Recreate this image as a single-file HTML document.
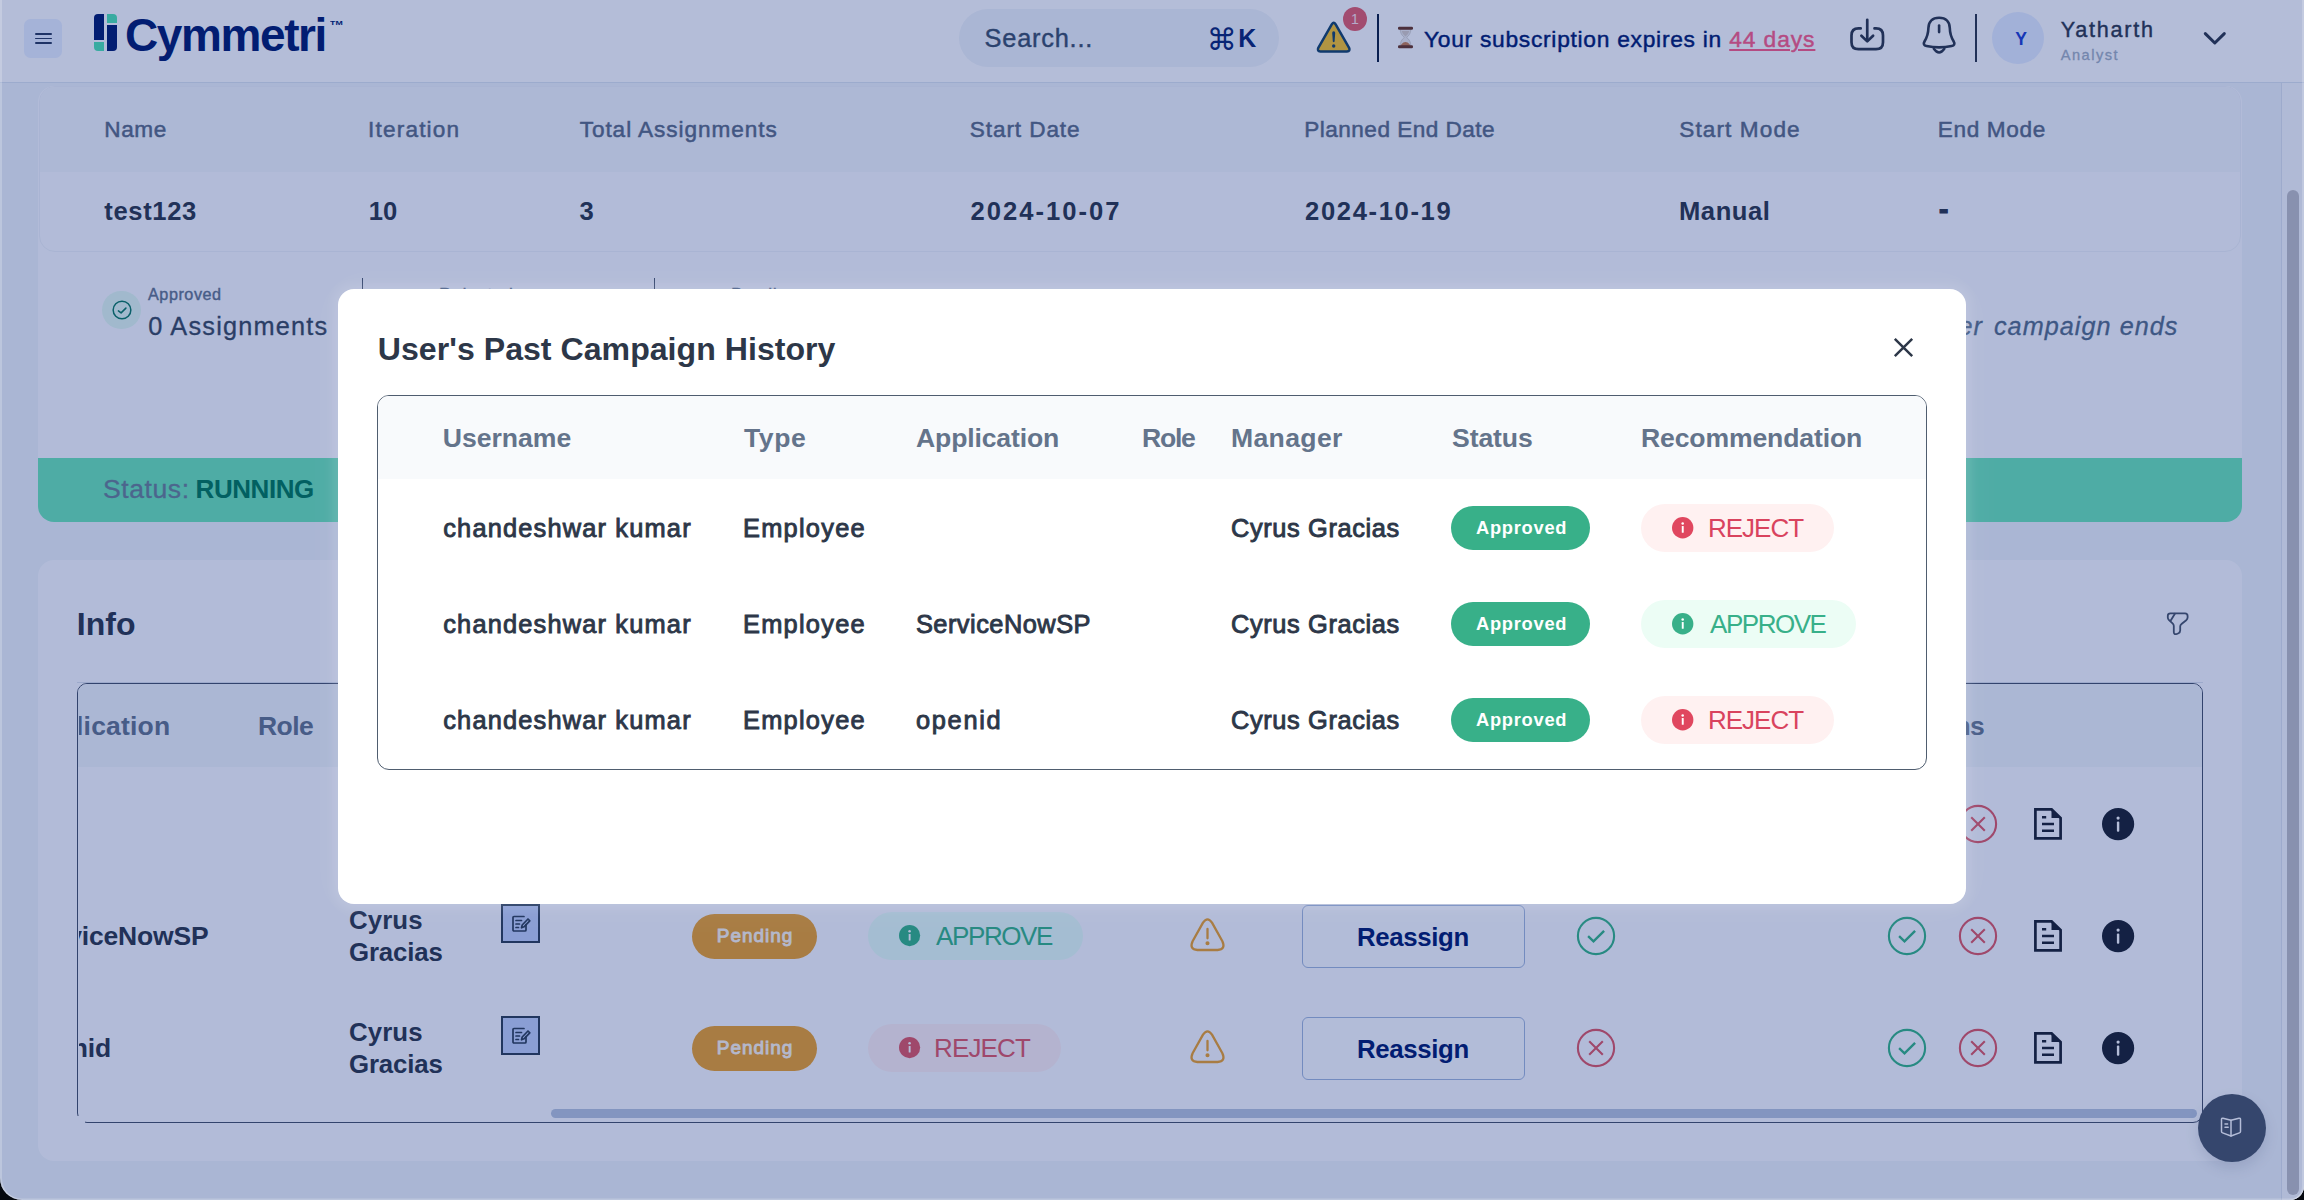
<!DOCTYPE html>
<html lang="en"><head><meta charset="utf-8"><title>Cymmetri - Campaign</title>
<style>
*{box-sizing:border-box;margin:0;padding:0}
html,body{width:2304px;height:1200px;overflow:hidden;background:#05080f;font-family:"Liberation Sans",sans-serif}
#page{position:absolute;left:0;top:0;width:2304px;height:1200px;background:#F1F5F9;overflow:hidden;border-radius:0 0 14px 22px}
.a{position:absolute}
.t{position:absolute;white-space:nowrap;line-height:1;display:block}
#overlay{position:absolute;left:0;top:0;width:2304px;height:1200px;background:rgba(8,35,125,0.30);border-radius:0 0 14px 22px;box-shadow:inset 2px 0 0 rgba(255,255,255,0.22),inset -2px 0 0 rgba(255,255,255,0.22),inset 0 -1.5px 0 rgba(255,255,255,0.22)}
#modal{position:absolute;left:337.9px;top:289.2px;width:1628.3px;height:615px;background:#fff;border-radius:16px;box-shadow:0 0 10px 6px rgba(255,255,255,0.10),0 0 40px 8px rgba(255,255,255,0.05)}
svg{position:absolute;overflow:visible}
</style></head><body>
<div id="page">
  <!-- header -->
  <div class="a" style="left:0;top:0;width:2304px;height:82.6px;background:#fff;border-bottom:1.6px solid #DDE5F0"></div>
  <div class="a" style="left:24px;top:19.2px;width:38.3px;height:38.5px;border-radius:6.5px;background:#EAF1FF"></div>
  <div class="a" style="left:34.6px;top:33.2px;width:17.2px;height:1.8px;border-radius:1px;background:#2A3A5C"></div>
  <div class="a" style="left:34.6px;top:37.6px;width:17.2px;height:1.8px;border-radius:1px;background:#2A3A5C"></div>
  <div class="a" style="left:34.6px;top:41.9px;width:17.2px;height:1.8px;border-radius:1px;background:#2A3A5C"></div>
  <!-- logo mark -->
  <div class="a" style="left:94.3px;top:14.3px;width:9.6px;height:25.5px;border-radius:4px 0 0 0;background:#001A6E"></div>
  <div class="a" style="left:94.3px;top:41.8px;width:9.6px;height:9.3px;border-radius:0 0 0 4px;background:#50E6B0"></div>
  <div class="a" style="left:107.2px;top:14.3px;width:9.7px;height:8.8px;border-radius:0 4px 0 0;background:#50E6B0"></div>
  <div class="a" style="left:107.2px;top:25px;width:9.7px;height:26.1px;border-radius:0 0 4px 0;background:#001A6E"></div>
  <!-- search -->
  <div class="a" style="left:959px;top:9px;width:320px;height:58px;border-radius:29px;background:#F1F5F9"></div>
  <span class="t" style="left:1206.8px;top:24.6px;font-family:'DejaVu Sans',sans-serif;font-size:30px;color:#0A2472;">⌘</span>
  <!-- warning icon + badge -->
  <svg style="left:1314px;top:18px" width="40" height="38" viewBox="0 0 40 38"><path d="M17.9 6.2 Q19.7 3.4 21.5 6.2 L35.1 29.8 Q36.6 33.2 33 33.4 L6.4 33.4 Q2.8 33.2 4.3 29.8 Z" fill="#FBC429" stroke="#154468" stroke-width="2.5" stroke-linejoin="round"/><path d="M19.7 13.2 Q21.3 13.2 21.2 15 L20.6 23.5 Q19.7 24.8 18.8 23.5 L18.2 15 Q18.1 13.2 19.7 13.2Z" fill="#154468"/><circle cx="19.7" cy="28" r="1.7" fill="#154468"/></svg>
  <div class="a" style="left:1343px;top:7px;width:24px;height:24px;border-radius:12px;background:#E55E6A"></div>
  <div class="a" style="left:1376.5px;top:14.3px;width:2px;height:48px;background:#0B1C3D"></div>
  <!-- hourglass -->
  <svg style="left:1397px;top:26px" width="17" height="23" viewBox="0 0 17 23"><path d="M3.2 3 L13.8 3 Q13.8 8.3 9.6 11.4 Q13.8 14.5 13.8 20 L3.2 20 Q3.2 14.5 7.4 11.4 Q3.2 8.3 3.2 3Z" fill="#EFEDEC" stroke="#C9C4C0" stroke-width="0.7"/><path d="M4.3 18.2 Q8.5 13.6 12.7 18.2 L12.9 20 L4.1 20Z" fill="#C77F4F"/><path d="M4.6 5 L12.4 5 Q11.5 8.5 8.5 10.6 Q5.5 8.5 4.6 5Z" fill="#D8CFC8"/><rect x="1" y="0.8" width="15" height="3" rx="1.3" fill="#6B3520"/><rect x="1" y="19.2" width="15" height="3" rx="1.3" fill="#6B3520"/></svg>
  <!-- download icon + bell -->
  <svg style="left:1836px;top:0" width="144" height="80" viewBox="1836 0 144 80" fill="none" stroke="#2D3748" stroke-width="2.7" stroke-linecap="round" stroke-linejoin="round"><path d="M1860.7 28.4 H1858.5 Q1851.5 28.4 1851.5 35.4 V42.2 Q1851.5 49.2 1858.5 49.2 H1876 Q1883 49.2 1883 42.2 V35.4 Q1883 28.4 1876 28.4 H1874.5"/><path d="M1867.25 19.8 V40.5"/><path d="M1861.4 35.7 L1867.25 41.4 L1873.1 35.7"/>
  <path stroke-width="2.6" d="M1939.1 17.8 C1932 17.8 1928.6 22.2 1928.4 28 C1928.3 33 1927.5 36.5 1924.6 41.2 C1923 43.8 1924 45.6 1926.5 46 C1934 47.6 1944.2 47.6 1951.7 46 C1954.2 45.6 1955.2 43.8 1953.6 41.2 C1950.7 36.5 1949.9 33 1949.8 28 C1949.6 22.2 1946.2 17.8 1939.1 17.8 Z"/><path stroke-width="2.4" d="M1933.8 48.8 Q1939.1 56.2 1944.4 48.8"/><path stroke-width="2.6" d="M1939.1 25.5 V32.1"/></svg>
  <div class="a" style="left:1974.9px;top:14.4px;width:2.2px;height:48px;background:#2D3748"></div>
  <div class="a" style="left:1992px;top:12px;width:52px;height:52px;border-radius:26px;background:#E6EEFF"></div>
  <svg style="left:2203px;top:31px" width="24" height="15" viewBox="0 0 24 15" fill="none" stroke="#2D3748" stroke-width="3" stroke-linecap="round" stroke-linejoin="round"><path d="M2.3 2.6 L11.8 12 L21.3 2.6"/></svg>
  <!-- page scrollbar -->
  <div class="a" style="left:2281px;top:83px;width:23px;height:1117px;background:#FAFBFD;border-left:1.2px solid #DFE4EE"></div>
  <div class="a" style="left:2287px;top:189.5px;width:12px;height:1005.5px;border-radius:6px;background:#C1C1C5"></div>

  <!-- card 1 -->
  <div class="a" style="left:38px;top:86px;width:2204px;height:436px;border-radius:16px;background:#FCFDFF"></div>
  <div class="a" style="left:39px;top:86px;width:2202px;height:166px;border-radius:16px;background:#FCFDFF;border:1px solid #F0F3F8;overflow:hidden"><div style="height:85px;background:#F5F8FB"></div></div>
  <!-- stats -->
  <div class="a" style="left:102.3px;top:290.7px;width:38.6px;height:38.6px;border-radius:20px;background:#E4FAF0"></div>
  <svg style="left:111.6px;top:300.3px" width="20" height="20" viewBox="0 0 20 20" fill="none" stroke="#0C7A60" stroke-width="1.5" stroke-linecap="round" stroke-linejoin="round"><circle cx="10" cy="10" r="8.85"/><path d="M6.4 10.9 L9.1 12.9 L13.9 8.1"/></svg>
  <div class="a" style="left:361.6px;top:278px;width:1.6px;height:70px;background:#4A5568"></div>
  <div class="a" style="left:653.6px;top:278px;width:1.6px;height:70px;background:#4A5568"></div>
  <!-- status bar -->
  <div class="a" style="left:38px;top:458px;width:2204px;height:64px;border-radius:0 0 16px 16px;background:#6EE7B7"></div>

  <!-- card 2 -->
  <div class="a" style="left:38px;top:560px;width:2204px;height:601px;border-radius:16px;background:#FCFDFF"></div>
  <svg style="left:2167px;top:612px" width="22" height="24" viewBox="0 0 22 24" fill="none" stroke="#4A5568" stroke-width="1.8" stroke-linecap="round" stroke-linejoin="round"><path d="M3.4 1.3 H18 Q20.6 1.3 20.6 4 V5.5 Q20.6 7 19.2 8.2 L14.5 12 Q13.2 13 13.2 14.6 V18.5 Q13.2 20.3 11.5 21.2 L9.8 22 Q6.8 22.8 6.8 20 V14 Q6.8 12.8 5.8 11.7 L1.8 7.8 Q0.8 6.8 0.8 5.5 V3.8 Q0.8 1.3 3.4 1.3 Z"/><path d="M7.9 1.7 L3.6 8.8"/></svg>
  <div class="a" style="left:77px;top:681.6px;width:2126px;height:1.4px;background:#DDE3EC"></div>
  <div class="a" style="left:77px;top:683px;width:2126px;height:439.6px;border-radius:10px;border:1.6px solid #465166;background:#FCFDFF;overflow:hidden"><div style="height:83.4px;background:#F3F6FA"></div></div>
  <div class="a" style="left:75px;top:1116px;width:9.5px;height:8px;background:#FCFDFF"></div>
  <!-- horizontal scrollbar -->
  <div class="a" style="left:551px;top:1109px;width:1645.6px;height:9px;border-radius:5px;background:#B9C6DD"></div>
  <!-- row icons -->
  <div class="a" style="left:501px;top:792px;width:39px;height:39px;background:#C3D3FA;border:2px solid #2D3E52"></div><svg style="left:511px;top:802px" width="20" height="19" viewBox="0 0 20 19" fill="none" stroke="#2D3E52" stroke-width="1.7" stroke-linejoin="round" stroke-linecap="round"><path d="M15 10.5 V16 Q15 17 14 17 H3 Q2 17 2 16 V3.5 Q2 2.5 3 2.5 H13"/><path d="M5 6.5 H10.5 M5 10 H8.5 M5 13.5 H7.5"/><path d="M10.5 13.8 L11.2 11 L17 5 L18.8 6.8 L13 12.8 Z"/></svg><div class="a" style="left:692.4px;top:801.6px;width:124.60000000000002px;height:45px;border-radius:22.5px;background:#EEA22A;"></div><div class="a" style="left:867.7px;top:799.75px;width:193.29999999999995px;height:48.3px;border-radius:24.15px;background:#FFF1F3;"></div><svg style="left:899.1px;top:813.1999999999999px" width="21.2" height="21.2" viewBox="0 0 21 21"><circle cx="10.5" cy="10.5" r="10.5" fill="#E15864"/><circle cx="10.5" cy="6.3" r="1.25" fill="#fff"/><rect x="9.6" y="8.8" width="1.9" height="6.6" rx="0.5" fill="#fff"/></svg><svg style="left:1575.8px;top:804px" width="40" height="40" viewBox="0 0 40 40" fill="none" stroke="#E15864" stroke-width="2.1" stroke-linecap="butt"><circle cx="20" cy="20" r="18.1"/><path d="M13.2 13.2 L26.8 26.8 M26.8 13.2 L13.2 26.8"/></svg><svg style="left:1189.0px;top:805.2px" width="37" height="36" viewBox="0 0 37 36" fill="none" stroke="#EEA22A" stroke-width="2.3" stroke-linecap="round" stroke-linejoin="round"><path d="M14 5.6 Q18.5 -1 23 5.6 L33.4 24.2 Q37 32.4 28.6 33 H8.4 Q0 32.4 3.6 24.2 Z"/><path d="M18.5 12 V21.3"/><circle cx="18.5" cy="26.3" r="0.9" fill="#EEA22A"/></svg><div class="a" style="left:1302px;top:793px;width:223px;height:63px;border-radius:6px;border:1.6px solid #A3B8DC;background:#FDFEFF"></div><svg style="left:1887.1px;top:804px" width="40" height="40" viewBox="0 0 40 40" fill="none" stroke="#36B685" stroke-width="2.1" stroke-linecap="butt" stroke-linejoin="miter"><circle cx="20" cy="20" r="18.1"/><path d="M12.1 20.2 L17.5 25.3 L28.1 14.8" stroke-width="2.4"/></svg><svg style="left:1957.6px;top:804px" width="40" height="40" viewBox="0 0 40 40" fill="none" stroke="#E15864" stroke-width="2.1" stroke-linecap="butt"><circle cx="20" cy="20" r="18.1"/><path d="M13.2 13.2 L26.8 26.8 M26.8 13.2 L13.2 26.8"/></svg><svg style="left:2033.8px;top:808px" width="28" height="32" viewBox="0 0 28 32" fill="none" stroke="#1A202C" stroke-width="2.7" stroke-linejoin="miter"><path d="M1.4 1.4 H17.6 L26.6 10 V30.4 H1.4 Z"/><path d="M17.5 0.6 V10 H27.2 Z" fill="#1A202C" stroke="none"/><path d="M8 9.3 H12.2 M8 16 H20 M8 22.8 H20" stroke-width="2.6"/></svg><svg style="left:2102.3px;top:807.9px" width="32.2" height="32.2" viewBox="0 0 32 32"><circle cx="16" cy="16" r="16" fill="#1A202C"/><circle cx="16" cy="10" r="1.6" fill="#fff"/><rect x="14.8" y="13.4" width="2.4" height="10.2" rx="1" fill="#fff"/></svg><div class="a" style="left:501px;top:904px;width:39px;height:39px;background:#C3D3FA;border:2px solid #2D3E52"></div><svg style="left:511px;top:914px" width="20" height="19" viewBox="0 0 20 19" fill="none" stroke="#2D3E52" stroke-width="1.7" stroke-linejoin="round" stroke-linecap="round"><path d="M15 10.5 V16 Q15 17 14 17 H3 Q2 17 2 16 V3.5 Q2 2.5 3 2.5 H13"/><path d="M5 6.5 H10.5 M5 10 H8.5 M5 13.5 H7.5"/><path d="M10.5 13.8 L11.2 11 L17 5 L18.8 6.8 L13 12.8 Z"/></svg><div class="a" style="left:692.4px;top:913.6px;width:124.60000000000002px;height:45px;border-radius:22.5px;background:#EEA22A;"></div><div class="a" style="left:867.7px;top:911.75px;width:215.29999999999995px;height:48.3px;border-radius:24.15px;background:#E8FFF6;"></div><svg style="left:899.1px;top:925.1999999999999px" width="21.2" height="21.2" viewBox="0 0 21 21"><circle cx="10.5" cy="10.5" r="10.5" fill="#36B685"/><circle cx="10.5" cy="6.3" r="1.25" fill="#fff"/><rect x="9.6" y="8.8" width="1.9" height="6.6" rx="0.5" fill="#fff"/></svg><svg style="left:1575.8px;top:916px" width="40" height="40" viewBox="0 0 40 40" fill="none" stroke="#36B685" stroke-width="2.1" stroke-linecap="butt" stroke-linejoin="miter"><circle cx="20" cy="20" r="18.1"/><path d="M12.1 20.2 L17.5 25.3 L28.1 14.8" stroke-width="2.4"/></svg><svg style="left:1189.0px;top:917.2px" width="37" height="36" viewBox="0 0 37 36" fill="none" stroke="#EEA22A" stroke-width="2.3" stroke-linecap="round" stroke-linejoin="round"><path d="M14 5.6 Q18.5 -1 23 5.6 L33.4 24.2 Q37 32.4 28.6 33 H8.4 Q0 32.4 3.6 24.2 Z"/><path d="M18.5 12 V21.3"/><circle cx="18.5" cy="26.3" r="0.9" fill="#EEA22A"/></svg><div class="a" style="left:1302px;top:905px;width:223px;height:63px;border-radius:6px;border:1.6px solid #A3B8DC;background:#FDFEFF"></div><svg style="left:1887.1px;top:916px" width="40" height="40" viewBox="0 0 40 40" fill="none" stroke="#36B685" stroke-width="2.1" stroke-linecap="butt" stroke-linejoin="miter"><circle cx="20" cy="20" r="18.1"/><path d="M12.1 20.2 L17.5 25.3 L28.1 14.8" stroke-width="2.4"/></svg><svg style="left:1957.6px;top:916px" width="40" height="40" viewBox="0 0 40 40" fill="none" stroke="#E15864" stroke-width="2.1" stroke-linecap="butt"><circle cx="20" cy="20" r="18.1"/><path d="M13.2 13.2 L26.8 26.8 M26.8 13.2 L13.2 26.8"/></svg><svg style="left:2033.8px;top:920px" width="28" height="32" viewBox="0 0 28 32" fill="none" stroke="#1A202C" stroke-width="2.7" stroke-linejoin="miter"><path d="M1.4 1.4 H17.6 L26.6 10 V30.4 H1.4 Z"/><path d="M17.5 0.6 V10 H27.2 Z" fill="#1A202C" stroke="none"/><path d="M8 9.3 H12.2 M8 16 H20 M8 22.8 H20" stroke-width="2.6"/></svg><svg style="left:2102.3px;top:919.9px" width="32.2" height="32.2" viewBox="0 0 32 32"><circle cx="16" cy="16" r="16" fill="#1A202C"/><circle cx="16" cy="10" r="1.6" fill="#fff"/><rect x="14.8" y="13.4" width="2.4" height="10.2" rx="1" fill="#fff"/></svg><div class="a" style="left:501px;top:1016px;width:39px;height:39px;background:#C3D3FA;border:2px solid #2D3E52"></div><svg style="left:511px;top:1026px" width="20" height="19" viewBox="0 0 20 19" fill="none" stroke="#2D3E52" stroke-width="1.7" stroke-linejoin="round" stroke-linecap="round"><path d="M15 10.5 V16 Q15 17 14 17 H3 Q2 17 2 16 V3.5 Q2 2.5 3 2.5 H13"/><path d="M5 6.5 H10.5 M5 10 H8.5 M5 13.5 H7.5"/><path d="M10.5 13.8 L11.2 11 L17 5 L18.8 6.8 L13 12.8 Z"/></svg><div class="a" style="left:692.4px;top:1025.6px;width:124.60000000000002px;height:45px;border-radius:22.5px;background:#EEA22A;"></div><div class="a" style="left:867.7px;top:1023.7500000000001px;width:193.29999999999995px;height:48.3px;border-radius:24.15px;background:#FFF1F3;"></div><svg style="left:899.1px;top:1037.2px" width="21.2" height="21.2" viewBox="0 0 21 21"><circle cx="10.5" cy="10.5" r="10.5" fill="#E15864"/><circle cx="10.5" cy="6.3" r="1.25" fill="#fff"/><rect x="9.6" y="8.8" width="1.9" height="6.6" rx="0.5" fill="#fff"/></svg><svg style="left:1575.8px;top:1028px" width="40" height="40" viewBox="0 0 40 40" fill="none" stroke="#E15864" stroke-width="2.1" stroke-linecap="butt"><circle cx="20" cy="20" r="18.1"/><path d="M13.2 13.2 L26.8 26.8 M26.8 13.2 L13.2 26.8"/></svg><svg style="left:1189.0px;top:1029.2px" width="37" height="36" viewBox="0 0 37 36" fill="none" stroke="#EEA22A" stroke-width="2.3" stroke-linecap="round" stroke-linejoin="round"><path d="M14 5.6 Q18.5 -1 23 5.6 L33.4 24.2 Q37 32.4 28.6 33 H8.4 Q0 32.4 3.6 24.2 Z"/><path d="M18.5 12 V21.3"/><circle cx="18.5" cy="26.3" r="0.9" fill="#EEA22A"/></svg><div class="a" style="left:1302px;top:1017px;width:223px;height:63px;border-radius:6px;border:1.6px solid #A3B8DC;background:#FDFEFF"></div><svg style="left:1887.1px;top:1028px" width="40" height="40" viewBox="0 0 40 40" fill="none" stroke="#36B685" stroke-width="2.1" stroke-linecap="butt" stroke-linejoin="miter"><circle cx="20" cy="20" r="18.1"/><path d="M12.1 20.2 L17.5 25.3 L28.1 14.8" stroke-width="2.4"/></svg><svg style="left:1957.6px;top:1028px" width="40" height="40" viewBox="0 0 40 40" fill="none" stroke="#E15864" stroke-width="2.1" stroke-linecap="butt"><circle cx="20" cy="20" r="18.1"/><path d="M13.2 13.2 L26.8 26.8 M26.8 13.2 L13.2 26.8"/></svg><svg style="left:2033.8px;top:1032px" width="28" height="32" viewBox="0 0 28 32" fill="none" stroke="#1A202C" stroke-width="2.7" stroke-linejoin="miter"><path d="M1.4 1.4 H17.6 L26.6 10 V30.4 H1.4 Z"/><path d="M17.5 0.6 V10 H27.2 Z" fill="#1A202C" stroke="none"/><path d="M8 9.3 H12.2 M8 16 H20 M8 22.8 H20" stroke-width="2.6"/></svg><svg style="left:2102.3px;top:1031.9px" width="32.2" height="32.2" viewBox="0 0 32 32"><circle cx="16" cy="16" r="16" fill="#1A202C"/><circle cx="16" cy="10" r="1.6" fill="#fff"/><rect x="14.8" y="13.4" width="2.4" height="10.2" rx="1" fill="#fff"/></svg>
  <!-- floating help button -->
  <div class="a" style="left:2198px;top:1094px;width:67.5px;height:67.5px;border-radius:34px;background:#4A5566;box-shadow:0 6px 14px rgba(40,50,80,0.13)"></div>
  <svg style="left:2220px;top:1116.5px" width="22" height="21" viewBox="0 0 22 21" fill="none" stroke="#FFFFFF" stroke-width="1.5" stroke-linejoin="round" stroke-linecap="round"><path d="M11 3.3 L3 1.2 Q1.5 1 1.5 2.5 V14.5 Q1.5 15.6 2.6 15.9 L11 19 L19.4 15.9 Q20.5 15.6 20.5 14.5 V2.5 Q20.5 1 19 1.2 Z"/><path d="M11 3.3 V19"/><path d="M5 7 H7.6 M5 10.2 H8.2"/></svg>
  <span class="t" style="left:330.4px;top:21.4px;font-size:5.4px;font-weight:700;color:#001A6E;transform:scale(1.62,1);transform-origin:0 0;letter-spacing:0.1px">TM</span>
  <span class="t" id="logo" style="left:125.00px;top:12.05px;font-size:46px;font-weight:700;color:#001A6E;letter-spacing:-1.401px;">Cymmetri</span><span class="t" id="search" style="left:984.60px;top:26.05px;font-size:25.4px;font-weight:400;color:#3C5068;letter-spacing:0.755px;-webkit-text-stroke:0.4px #3C5068;">Search...</span><span class="t" id="cmdk" style="left:1238.30px;top:26.05px;font-size:24.9px;font-weight:700;color:#0A2472;letter-spacing:0.000px;">K</span><span class="t" id="badge" style="left:1351.00px;top:12.05px;font-size:14px;font-weight:400;color:#FFE4EA;letter-spacing:0.000px;">1</span><span class="t" id="sub" style="left:1423.92px;top:28.05px;font-size:22.8px;font-weight:400;color:#001A6E;letter-spacing:0.718px;-webkit-text-stroke:0.45px #001A6E;">Your subscription expires in</span><span class="t" id="days" style="left:1729.22px;top:28.05px;font-size:22.8px;font-weight:400;color:#FF5C85;letter-spacing:0.901px;-webkit-text-stroke:0.45px #FF5C85;text-decoration:underline;text-decoration-thickness:1.6px;text-underline-offset:1.6px;">44 days</span><span class="t" id="avY" style="left:2015.30px;top:31.05px;font-size:17.6px;font-weight:700;color:#1D3FD0;letter-spacing:0.000px;">Y</span><span class="t" id="uname" style="left:2060.70px;top:19.05px;font-size:21.6px;font-weight:400;color:#2D3748;letter-spacing:1.769px;-webkit-text-stroke:0.4px #2D3748;">Yatharth</span><span class="t" id="urole" style="left:2060.65px;top:48.05px;font-size:14.6px;font-weight:400;color:#A3B0C2;letter-spacing:1.516px;-webkit-text-stroke:0.3px #A3B0C2;">Analyst</span><span class="t" id="h1_0" style="left:104.25px;top:119.05px;font-size:22.6px;font-weight:400;color:#5C6C84;letter-spacing:0.599px;-webkit-text-stroke:0.5px #5C6C84;">Name</span><span class="t" id="h1_1" style="left:368.05px;top:119.05px;font-size:22.6px;font-weight:400;color:#5C6C84;letter-spacing:1.178px;-webkit-text-stroke:0.5px #5C6C84;">Iteration</span><span class="t" id="h1_2" style="left:579.65px;top:119.05px;font-size:22.6px;font-weight:400;color:#5C6C84;letter-spacing:0.947px;-webkit-text-stroke:0.5px #5C6C84;">Total Assignments</span><span class="t" id="h1_3" style="left:969.75px;top:119.05px;font-size:22.6px;font-weight:400;color:#5C6C84;letter-spacing:0.906px;-webkit-text-stroke:0.5px #5C6C84;">Start Date</span><span class="t" id="h1_4" style="left:1304.25px;top:119.05px;font-size:22.6px;font-weight:400;color:#5C6C84;letter-spacing:0.465px;-webkit-text-stroke:0.5px #5C6C84;">Planned End Date</span><span class="t" id="h1_5" style="left:1679.25px;top:119.05px;font-size:22.6px;font-weight:400;color:#5C6C84;letter-spacing:1.095px;-webkit-text-stroke:0.5px #5C6C84;">Start Mode</span><span class="t" id="h1_6" style="left:1937.75px;top:119.05px;font-size:22.6px;font-weight:400;color:#5C6C84;letter-spacing:0.653px;-webkit-text-stroke:0.5px #5C6C84;">End Mode</span><span class="t" id="r1_0" style="left:104.30px;top:199.05px;font-size:25.6px;font-weight:700;color:#2D3748;letter-spacing:0.620px;">test123</span><span class="t" id="r1_1" style="left:368.80px;top:199.05px;font-size:25.6px;font-weight:700;color:#2D3748;letter-spacing:-0.034px;">10</span><span class="t" id="r1_2" style="left:579.40px;top:199.05px;font-size:25.6px;font-weight:700;color:#2D3748;letter-spacing:0.000px;">3</span><span class="t" id="r1_3" style="left:970.50px;top:199.05px;font-size:25.6px;font-weight:700;color:#2D3748;letter-spacing:2.013px;">2024-10-07</span><span class="t" id="r1_4" style="left:1305.00px;top:199.05px;font-size:25.6px;font-weight:700;color:#2D3748;letter-spacing:1.646px;">2024-10-19</span><span class="t" id="r1_5" style="left:1679.00px;top:199.05px;font-size:25.6px;font-weight:700;color:#2D3748;letter-spacing:0.549px;">Manual</span><span class="t" id="r1_dash" style="left:1938.90px;top:196.05px;font-size:28px;font-weight:700;color:#2D3748;letter-spacing:0.000px;-webkit-text-stroke:1.2px #2D3748;">-</span><span class="t" id="appr" style="left:148.00px;top:286.05px;font-size:16.2px;font-weight:400;color:#64748B;letter-spacing:0.544px;-webkit-text-stroke:0.4px #64748B;">Approved</span><span class="t" id="assg" style="left:148.25px;top:314.05px;font-size:25.3px;font-weight:400;color:#3A4A5C;letter-spacing:1.203px;-webkit-text-stroke:0.3px #3A4A5C;">0 Assignments</span><span class="t" id="rej" style="left:439.20px;top:286.05px;font-size:16.2px;font-weight:400;color:#64748B;letter-spacing:1.388px;-webkit-text-stroke:0.4px #64748B;">Rejected</span><span class="t" id="pend" style="left:731.20px;top:286.05px;font-size:16.2px;font-weight:400;color:#64748B;letter-spacing:1.033px;-webkit-text-stroke:0.4px #64748B;">Pending</span><span class="t" id="note_v" style="left:1993.95px;top:314.05px;font-size:25.2px;font-weight:400;color:#566D87;letter-spacing:1.056px;-webkit-text-stroke:0.3px #566D87;font-style:italic;">campaign ends</span><span class="t" id="note" style="left:1634.82px;top:314.05px;font-size:25.2px;font-weight:400;color:#566D87;letter-spacing:1.056px;-webkit-text-stroke:0.3px #566D87;font-style:italic;">Report will be available after</span><span class="t" id="st1" style="left:102.95px;top:476.05px;font-size:26.6px;font-weight:400;color:#6A8294;letter-spacing:0.568px;-webkit-text-stroke:0.3px #6A8294;">Status:</span><span class="t" id="st2" style="left:195.60px;top:476.05px;font-size:26px;font-weight:700;color:#007A55;letter-spacing:-0.434px;">RUNNING</span><span class="t" id="info" style="left:76.80px;top:608.05px;font-size:32px;font-weight:700;color:#2D3748;letter-spacing:0.035px;">Info</span><span class="t" id="bh_role" style="left:258.00px;top:713.05px;font-size:26.5px;font-weight:700;color:#64748B;letter-spacing:-0.562px;">Role</span><span class="t" id="bh_act" style="left:1890.94px;top:713.05px;font-size:26.5px;font-weight:700;color:#64748B;letter-spacing:-0.562px;">Actions</span><span class="t" id="b2_m1" style="left:349.10px;top:908.05px;font-size:25.8px;font-weight:700;color:#2D3748;letter-spacing:0.082px;">Cyrus</span><span class="t" id="b2_m2" style="left:349.10px;top:940.05px;font-size:25.8px;font-weight:700;color:#2D3748;letter-spacing:-0.169px;">Gracias</span><span class="t" id="b2_pend" style="left:716.82px;top:926.05px;font-size:19px;font-weight:400;color:#FFF8EE;letter-spacing:0.948px;-webkit-text-stroke:0.85px #FFF8EE;">Pending</span><span class="t" id="b2_re" style="left:1357.00px;top:925.05px;font-size:25.8px;font-weight:700;color:#001A6E;letter-spacing:-0.363px;">Reassign</span><span class="t" id="b3_m1" style="left:349.10px;top:1020.05px;font-size:25.8px;font-weight:700;color:#2D3748;letter-spacing:0.082px;">Cyrus</span><span class="t" id="b3_m2" style="left:349.10px;top:1052.05px;font-size:25.8px;font-weight:700;color:#2D3748;letter-spacing:-0.169px;">Gracias</span><span class="t" id="b3_pend" style="left:716.82px;top:1038.05px;font-size:19px;font-weight:400;color:#FFF8EE;letter-spacing:0.948px;-webkit-text-stroke:0.85px #FFF8EE;">Pending</span><span class="t" id="b3_re" style="left:1357.00px;top:1037.05px;font-size:25.8px;font-weight:700;color:#001A6E;letter-spacing:-0.363px;">Reassign</span><span class="t" id="b2_rec" style="left:936.10px;top:923.05px;font-size:26px;font-weight:400;color:#36B685;letter-spacing:-1.411px;">APPROVE</span><span class="t" id="b3_rec" style="left:934.10px;top:1035.05px;font-size:26px;font-weight:400;color:#E15864;letter-spacing:-0.887px;">REJECT</span>
  <div class="a" style="left:79px;top:686px;width:2122px;height:434px;overflow:hidden"><div class="a" style="left:-79px;top:-686px;width:2304px;height:1200px"><span class="t" id="bh_app" style="left:23.93px;top:713.05px;font-size:26.5px;font-weight:700;color:#64748B;letter-spacing:0.198px;">Application</span><span class="t" id="b2_app" style="left:24.94px;top:923.05px;font-size:26.5px;font-weight:700;color:#2D3748;letter-spacing:-0.169px;">ServiceNowSP</span><span class="t" id="b3_app" style="left:25.18px;top:1035.05px;font-size:26.5px;font-weight:700;color:#2D3748;letter-spacing:-0.169px;">openid</span></div></div>
</div>
<div id="overlay"></div>
<div id="modal"></div>
<div id="mcontent" class="a" style="left:0;top:0;width:2304px;height:1200px">
  <svg style="left:1892.2px;top:336.2px" width="23" height="23" viewBox="0 0 23 23" fill="none" stroke="#2D3748" stroke-width="2.5" stroke-linecap="butt"><path d="M2.8 2.8 L20.2 20.2 M20.2 2.8 L2.8 20.2"/></svg>
  <div class="a" style="left:376.7px;top:395px;width:1550.3px;height:374.6px;border:1.6px solid #4F5D6F;border-radius:12px;overflow:hidden;background:#fff"><div style="height:83px;background:#F8FAFC"></div></div>
  <div class="a" style="left:1451px;top:505.54999999999995px;width:139px;height:44.5px;border-radius:22.25px;background:#38B089;"></div><div class="a" style="left:1640.6px;top:504.0px;width:193.70000000000005px;height:48px;border-radius:24.0px;background:#FFF1F1;"></div><svg style="left:1671.7px;top:517.3px" width="21.4" height="21.4" viewBox="0 0 21 21"><circle cx="10.5" cy="10.5" r="10.5" fill="#E0475F"/><circle cx="10.5" cy="6.3" r="1.25" fill="#fff"/><rect x="9.6" y="8.8" width="1.9" height="6.6" rx="0.5" fill="#fff"/></svg><div class="a" style="left:1451px;top:601.55px;width:139px;height:44.5px;border-radius:22.25px;background:#38B089;"></div><div class="a" style="left:1640.6px;top:600.0px;width:215.70000000000005px;height:48px;border-radius:24.0px;background:#ECFDF5;"></div><svg style="left:1671.7px;top:613.3px" width="21.4" height="21.4" viewBox="0 0 21 21"><circle cx="10.5" cy="10.5" r="10.5" fill="#38B089"/><circle cx="10.5" cy="6.3" r="1.25" fill="#fff"/><rect x="9.6" y="8.8" width="1.9" height="6.6" rx="0.5" fill="#fff"/></svg><div class="a" style="left:1451px;top:697.55px;width:139px;height:44.5px;border-radius:22.25px;background:#38B089;"></div><div class="a" style="left:1640.6px;top:696.0px;width:193.70000000000005px;height:48px;border-radius:24.0px;background:#FFF1F1;"></div><svg style="left:1671.7px;top:709.3px" width="21.4" height="21.4" viewBox="0 0 21 21"><circle cx="10.5" cy="10.5" r="10.5" fill="#E0475F"/><circle cx="10.5" cy="6.3" r="1.25" fill="#fff"/><rect x="9.6" y="8.8" width="1.9" height="6.6" rx="0.5" fill="#fff"/></svg>
  <span class="t" id="mtitle" style="left:377.80px;top:333.05px;font-size:32.1px;font-weight:700;color:#2D3748;letter-spacing:0.028px;">User's Past Campaign History</span><span class="t" id="mh_0" style="left:442.80px;top:425.05px;font-size:26.6px;font-weight:700;color:#64748B;letter-spacing:-0.031px;">Username</span><span class="t" id="mh_1" style="left:744.00px;top:425.05px;font-size:26.6px;font-weight:700;color:#64748B;letter-spacing:0.565px;">Type</span><span class="t" id="mh_2" style="left:916.00px;top:425.05px;font-size:26.6px;font-weight:700;color:#64748B;letter-spacing:-0.154px;">Application</span><span class="t" id="mh_3" style="left:1142.00px;top:425.05px;font-size:26.6px;font-weight:700;color:#64748B;letter-spacing:-1.279px;">Role</span><span class="t" id="mh_4" style="left:1231.00px;top:425.05px;font-size:26.6px;font-weight:700;color:#64748B;letter-spacing:0.331px;">Manager</span><span class="t" id="mh_5" style="left:1452.00px;top:425.05px;font-size:26.6px;font-weight:700;color:#64748B;letter-spacing:-0.097px;">Status</span><span class="t" id="mh_6" style="left:1641.00px;top:425.05px;font-size:26.6px;font-weight:700;color:#64748B;letter-spacing:-0.145px;">Recommendation</span><span class="t" id="m1_u" style="left:443.25px;top:516.05px;font-size:25.4px;font-weight:400;color:#2D3748;letter-spacing:1.170px;-webkit-text-stroke:0.9px #2D3748;">chandeshwar kumar</span><span class="t" id="m1_t" style="left:742.95px;top:516.05px;font-size:25.4px;font-weight:400;color:#2D3748;letter-spacing:1.259px;-webkit-text-stroke:0.9px #2D3748;">Employee</span><span class="t" id="m1_m" style="left:1230.95px;top:516.05px;font-size:25.4px;font-weight:400;color:#2D3748;letter-spacing:0.622px;-webkit-text-stroke:0.9px #2D3748;">Cyrus Gracias</span><span class="t" id="m1_s" style="left:1476.00px;top:519.05px;font-size:18.3px;font-weight:700;color:#FFFFFF;letter-spacing:0.735px;">Approved</span><span class="t" id="m2_u" style="left:443.25px;top:612.05px;font-size:25.4px;font-weight:400;color:#2D3748;letter-spacing:1.170px;-webkit-text-stroke:0.9px #2D3748;">chandeshwar kumar</span><span class="t" id="m2_t" style="left:742.95px;top:612.05px;font-size:25.4px;font-weight:400;color:#2D3748;letter-spacing:1.259px;-webkit-text-stroke:0.9px #2D3748;">Employee</span><span class="t" id="m2_m" style="left:1230.95px;top:612.05px;font-size:25.4px;font-weight:400;color:#2D3748;letter-spacing:0.622px;-webkit-text-stroke:0.9px #2D3748;">Cyrus Gracias</span><span class="t" id="m2_s" style="left:1476.00px;top:615.05px;font-size:18.3px;font-weight:700;color:#FFFFFF;letter-spacing:0.735px;">Approved</span><span class="t" id="m3_u" style="left:443.25px;top:708.05px;font-size:25.4px;font-weight:400;color:#2D3748;letter-spacing:1.170px;-webkit-text-stroke:0.9px #2D3748;">chandeshwar kumar</span><span class="t" id="m3_t" style="left:742.95px;top:708.05px;font-size:25.4px;font-weight:400;color:#2D3748;letter-spacing:1.259px;-webkit-text-stroke:0.9px #2D3748;">Employee</span><span class="t" id="m3_m" style="left:1230.95px;top:708.05px;font-size:25.4px;font-weight:400;color:#2D3748;letter-spacing:0.622px;-webkit-text-stroke:0.9px #2D3748;">Cyrus Gracias</span><span class="t" id="m3_s" style="left:1476.00px;top:711.05px;font-size:18.3px;font-weight:700;color:#FFFFFF;letter-spacing:0.735px;">Approved</span><span class="t" id="m2_a" style="left:915.95px;top:612.05px;font-size:25.4px;font-weight:400;color:#2D3748;letter-spacing:0.473px;-webkit-text-stroke:0.9px #2D3748;">ServiceNowSP</span><span class="t" id="m3_a" style="left:915.95px;top:708.05px;font-size:25.4px;font-weight:400;color:#2D3748;letter-spacing:1.695px;-webkit-text-stroke:0.9px #2D3748;">openid</span><span class="t" id="m1_r" style="left:1708.00px;top:515.05px;font-size:26px;font-weight:400;color:#D9435E;letter-spacing:-1.007px;">REJECT</span><span class="t" id="m2_r" style="left:1710.00px;top:611.05px;font-size:26px;font-weight:400;color:#38B089;letter-spacing:-1.461px;">APPROVE</span><span class="t" id="m3_r" style="left:1708.00px;top:707.05px;font-size:26px;font-weight:400;color:#D9435E;letter-spacing:-1.007px;">REJECT</span>
</div>
</body></html>
